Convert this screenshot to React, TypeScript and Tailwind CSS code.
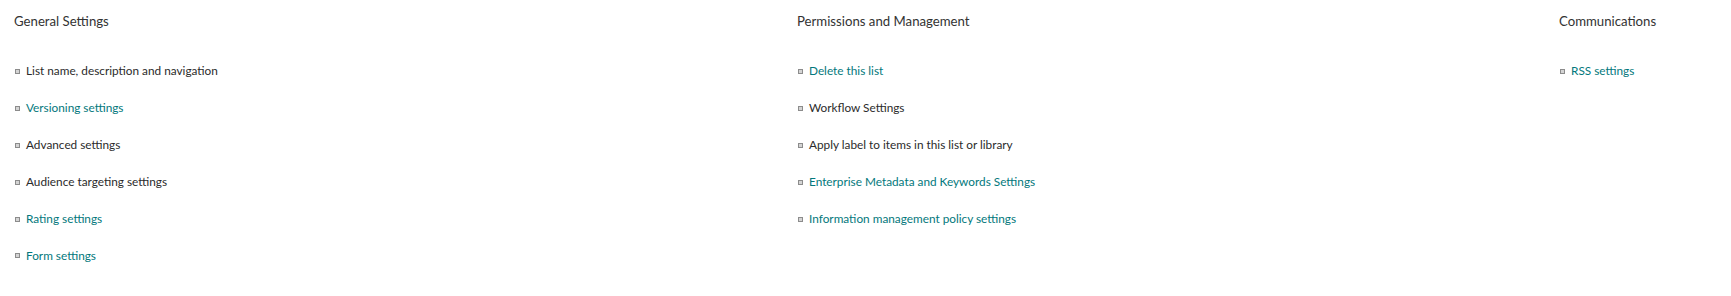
type Item = { label: string; link?: boolean };

const sections: { title: string; width: string; items: Item[] }[] = [
  {
    title: "General Settings",
    width: "w-[783px]",
    items: [
      { label: "List name, description and navigation" },
      { label: "Versioning settings", link: true },
      { label: "Advanced settings" },
      { label: "Audience targeting settings" },
      { label: "Rating settings", link: true },
      { label: "Form settings", link: true },
    ],
  },
  {
    title: "Permissions and Management",
    width: "w-[762px]",
    items: [
      { label: "Delete this list", link: true },
      { label: "Workflow Settings" },
      { label: "Apply label to items in this list or library" },
      { label: "Enterprise Metadata and Keywords Settings", link: true },
      { label: "Information management policy settings", link: true },
    ],
  },
  {
    title: "Communications",
    width: "flex-1",
    items: [{ label: "RSS settings", link: true }],
  },
];

const App = () => {
  return (
    <div
      className="w-[1731px] h-[296px] bg-white flex pl-[14px] pt-[11px]"
      style={{ fontFamily: '"Segoe UI", Lato, sans-serif' }}
    >
      {sections.map((section) => (
        <div key={section.title} className={`${section.width} flex flex-col`}>
          <h3 className="text-[13.2px] leading-[20px] text-[#333333] font-normal">
            {section.title}
          </h3>
          <ul className="mt-[22px] flex flex-col">
            {section.items.map((item) => (
              <li key={item.label} className="h-[36.9px] flex items-center">
                {/* small square bullet */}
                <span className="w-[5px] h-[5px] ml-[1px] mr-[6px] border border-[#8c8c8c] bg-[#d4d4d4] shrink-0" />
                <a
                  href="#"
                  className={`text-[11.8px] leading-[18px] ${
                    item.link ? "text-[#03787c]" : "text-[#2b2b2b]"
                  }`}
                >
                  {item.label}
                </a>
              </li>
            ))}
          </ul>
        </div>
      ))}
    </div>
  );
};

export default App;
